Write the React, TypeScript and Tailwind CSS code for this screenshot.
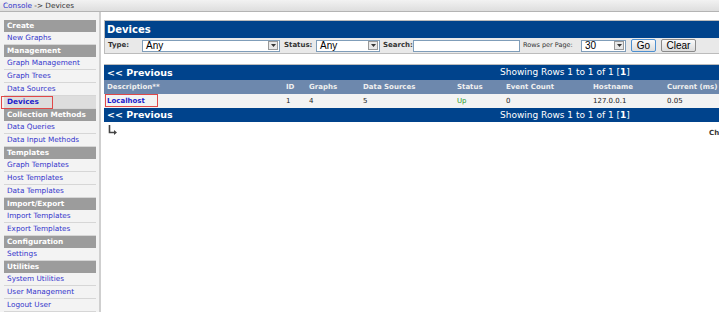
import React from "react";

type MenuRow = { label: string; header?: boolean; active?: boolean };

const MENU: MenuRow[] = [
  { label: "Create", header: true },
  { label: "New Graphs" },
  { label: "Management", header: true },
  { label: "Graph Management" },
  { label: "Graph Trees" },
  { label: "Data Sources" },
  { label: "Devices", active: true },
  { label: "Collection Methods", header: true },
  { label: "Data Queries" },
  { label: "Data Input Methods" },
  { label: "Templates", header: true },
  { label: "Graph Templates" },
  { label: "Host Templates" },
  { label: "Data Templates" },
  { label: "Import/Export", header: true },
  { label: "Import Templates" },
  { label: "Export Templates" },
  { label: "Configuration", header: true },
  { label: "Settings" },
  { label: "Utilities", header: true },
  { label: "System Utilities" },
  { label: "User Management" },
  { label: "Logout User" },
];

const COLUMNS = ["Description**", "ID", "Graphs", "Data Sources", "Status", "Event Count", "Hostname", "Current (ms)"];
const GRID = "grid grid-cols-[179px_23px_54px_94px_49px_87px_74px_1fr] pl-[3px] items-center";

const Select = ({ value, width }: { value: string; width: string }) => (
  <div className={`flex h-[12px] items-center justify-between border border-[#7f9db9] bg-white pl-[3px] ${width}`}>
    <span className="font-['Liberation_Sans',sans-serif] text-[10px] font-normal leading-none text-black">{value}</span>
    <span className="mr-[1px] flex h-[9px] w-[10px] items-center justify-center border border-[#999] bg-[#e8e8e8]">
      <svg width="5" height="3" viewBox="0 0 5 3">
        <path d="M0 0h5L2.5 3z" fill="#333" />
      </svg>
    </span>
  </div>
);

const NavBar = ({ h }: { h: string }) => (
  <div className={`flex items-center bg-[#00438c] text-white ${h}`}>
    <span className="w-[396px] pl-[3px] text-[9.5px] font-bold leading-none">&lt;&lt; Previous</span>
    <span className="text-[9px] leading-none">
      Showing Rows 1 to 1 of 1 [<b>1</b>]
    </span>
  </div>
);

export default function App() {
  return (
    <div className="relative h-[312px] w-[719px] overflow-hidden bg-white font-['DejaVu_Sans',sans-serif]">
      <div className="flex h-[12px] items-center border-b border-[#b4b4b4] bg-gradient-to-b from-[#f2f2f2] to-[#dedede] pl-[3px] text-[7.3px] leading-none">
        <span className="text-[#3333cc]">Console</span>
        <span className="text-[#333]">&nbsp;-&gt; Devices</span>
      </div>

      <div className="flex h-[300px]">
        <div className="w-[101px] shrink-0 border-r-2 border-[#cfcfcf] bg-[#f3f3f3] pl-[4px] pr-[3px] pt-[8px]">
          {MENU.map((row) =>
            row.header ? (
              <div key={row.label} className="flex h-[12px] items-center bg-[#9c9c9c] pl-[3px] text-[7.3px] font-bold leading-none text-white">
                {row.label}
              </div>
            ) : (
              <div
                key={row.label}
                className={`relative flex h-[13px] items-center border-b border-[#d6d6d6] pl-[3px] text-[7.3px] leading-none ${row.active ? "bg-[#dddddd] font-bold text-[#1a1acc]" : "text-[#3333cc]"}`}
              >
                {row.label}
                {row.active && <span className="absolute left-[-3px] top-[0px] h-[13px] w-[52px] border border-[#e04848]" />}
              </div>
            )
          )}
        </div>

        <div className="w-[960px] shrink-0 pl-[3px] pt-[8px]">
          <div className="border border-[#bcbcbc]">
            <div className="flex h-[17px] items-center bg-[#00438c] pl-[2px] text-[10px] font-bold leading-none text-white">Devices</div>
            <div className="flex h-[15px] items-center bg-[#e9e9e9] pl-[3px] text-[7px] font-bold leading-none text-[#333]">
              <span className="w-[34px]">Type:</span>
              <Select value="Any" width="w-[138px]" />
              <span className="ml-[4px] w-[32px]">Status:</span>
              <Select value="Any" width="w-[64px]" />
              <span className="ml-[3px] w-[30px]">Search:</span>
              <div className="h-[12px] w-[107px] border border-[#7f9db9] bg-white" />
              <span className="ml-[3px] w-[58px] text-[6.5px] font-normal">Rows per Page:</span>
              <Select value="30" width="w-[45px]" />
              <button className="ml-[5px] h-[13px] w-[25px] rounded-[2px] border border-[#4c8fd0] bg-gradient-to-b from-[#fafafa] to-[#dcdcdc] font-['Liberation_Sans',sans-serif] text-[10px] font-normal leading-none text-black">
                Go
              </button>
              <button className="ml-[5px] h-[13px] w-[35px] rounded-[2px] border border-[#8a8a8a] bg-gradient-to-b from-[#fafafa] to-[#dcdcdc] font-['Liberation_Sans',sans-serif] text-[10px] font-normal leading-none text-black">
                Clear
              </button>
            </div>
          </div>

          <div className="mt-[10px] border-t border-[#bcbcbc]">
            <NavBar h="h-[15px]" />
            <div className={`${GRID} h-[14px] bg-[#6d88ad] text-[7px] font-bold leading-none text-[#f0f0f0]`}>
              {COLUMNS.map((c) => (
                <span key={c}>{c}</span>
              ))}
            </div>
            <div className="relative">
              <div className={`${GRID} h-[14px] bg-[#f3f3f3] text-[7px] leading-none text-[#222]`}>
                <span className="font-bold text-[#1a1acc]">Localhost</span>
                <span>1</span>
                <span>4</span>
                <span>5</span>
                <span className="text-[#2a9a2a]">Up</span>
                <span>0</span>
                <span>127.0.0.1</span>
                <span>0.05</span>
              </div>
              <div className="absolute left-[1px] top-[0px] h-[13px] w-[53px] border border-[#e04848]" />
            </div>
            <NavBar h="h-[14px]" />
          </div>

          <div className="flex h-[16px] items-center pl-[4px]">
            <svg width="9" height="10" viewBox="0 0 9 10">
              <path d="M1.5 0v7.5H7" stroke="#444" strokeWidth="1.6" fill="none" />
              <path d="M6 5l3 2.5L6 10z" fill="#444" />
            </svg>
            <span className="ml-[592px] mt-[6px] text-[7px] font-bold leading-none text-[#333]">Choose an action:</span>
          </div>
        </div>
      </div>
    </div>
  );
}
